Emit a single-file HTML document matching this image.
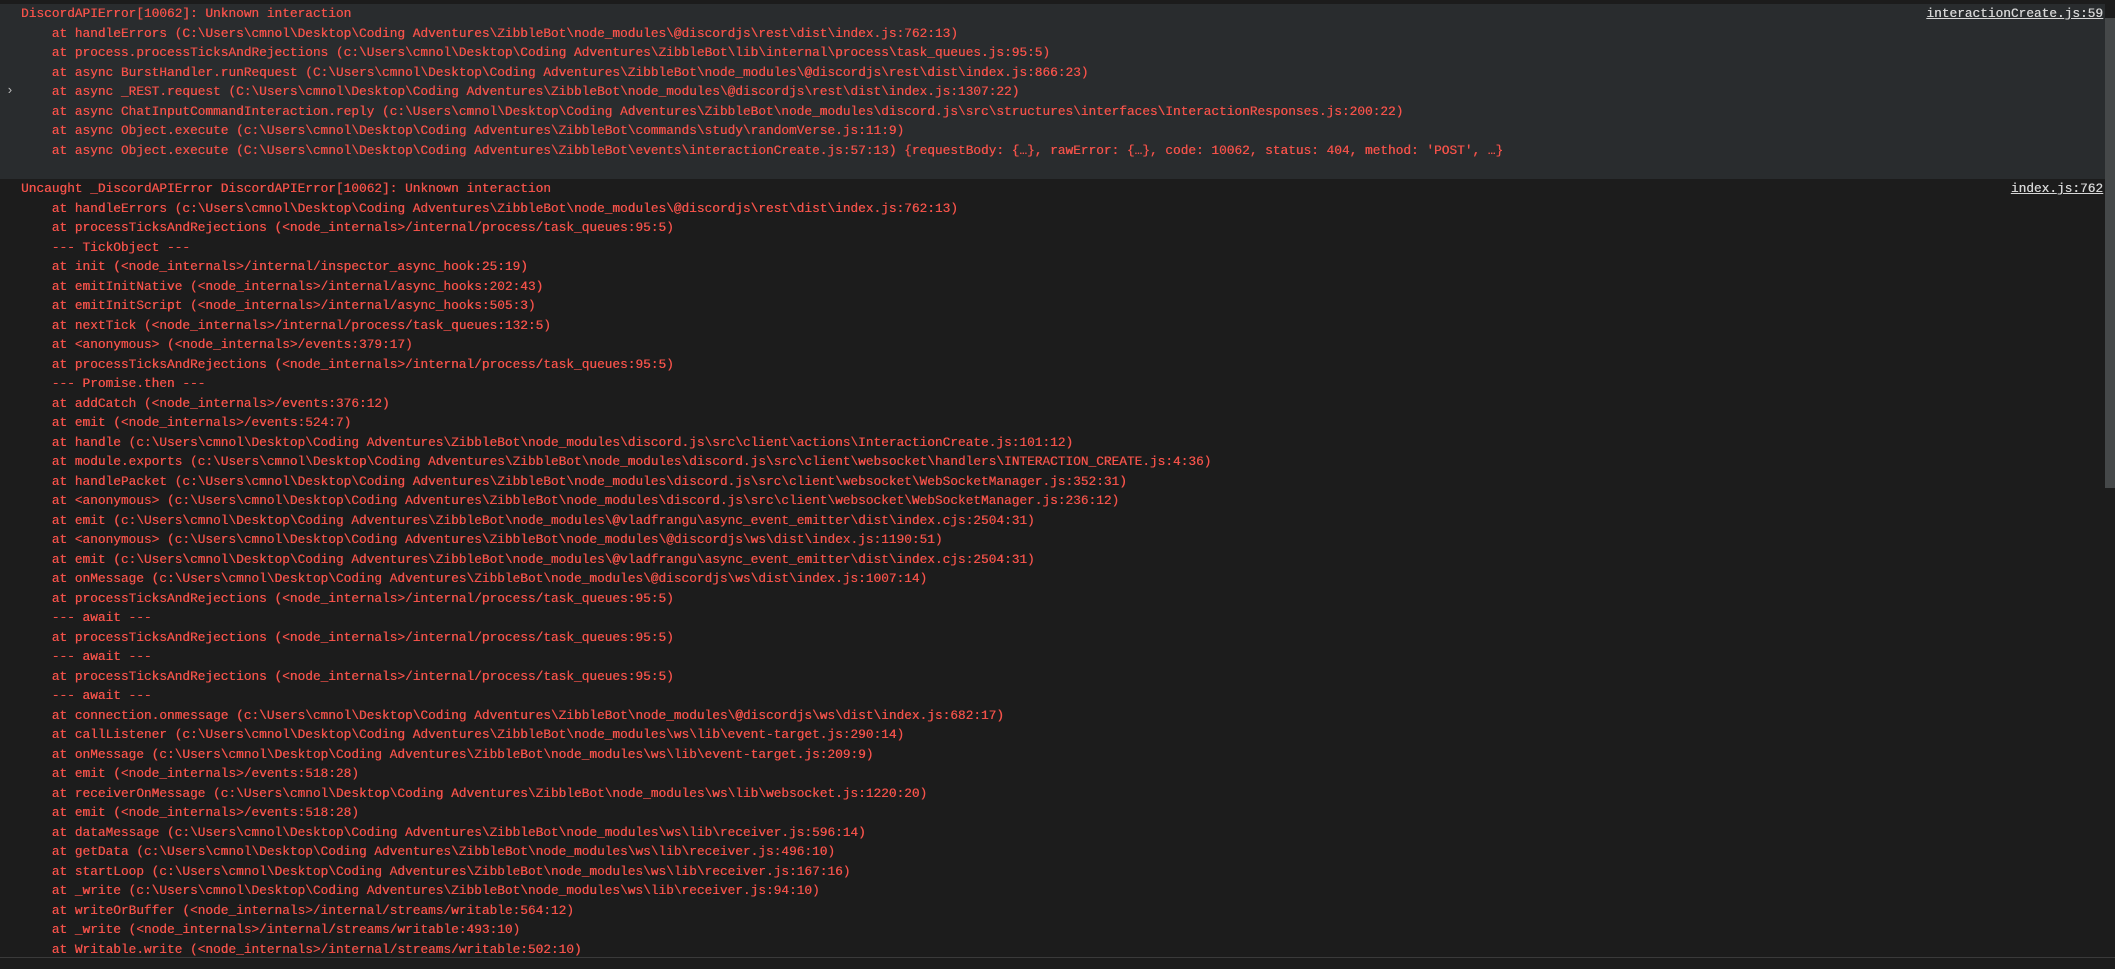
<!DOCTYPE html>
<html><head><meta charset="utf-8"><style>
html,body{margin:0;padding:0;width:2115px;height:968px;overflow:hidden;background:#1c1c1c;}
body{font-family:"Liberation Mono",monospace;font-size:12.8px;color:#f4524a;}
.b1{position:absolute;left:0;top:4px;width:2105px;height:175px;background:#292c2e;}
.b2{position:absolute;left:0;top:179px;width:2105px;height:778px;background:#1c1c1c;overflow:hidden;}
.l{height:19.5px;line-height:19.5px;white-space:pre;padding-left:21px;position:relative;text-shadow:0.3px 0 0 currentColor;}
.lk{position:absolute;right:2px;top:0;color:#d6d6d6;text-decoration:underline;}
.sb{position:absolute;left:2105px;top:18px;width:10px;height:470px;background:#454849;}
.bot{position:absolute;left:0;top:957px;width:2115px;height:11px;background:#1c1c1c;border-top:1px solid #3a3a3a;}
.chev{position:absolute;left:6px;top:79px;color:#bbb;font-size:13px;}
</style></head><body>
<div class="b1">
<div class="l">DiscordAPIError[10062]: Unknown interaction<span class="lk">interactionCreate.js:59</span></div>
<div class="l">    at handleErrors (C:\Users\cmnol\Desktop\Coding Adventures\ZibbleBot\node_modules\@discordjs\rest\dist\index.js:762:13)</div>
<div class="l">    at process.processTicksAndRejections (c:\Users\cmnol\Desktop\Coding Adventures\ZibbleBot\lib\internal\process\task_queues.js:95:5)</div>
<div class="l">    at async BurstHandler.runRequest (C:\Users\cmnol\Desktop\Coding Adventures\ZibbleBot\node_modules\@discordjs\rest\dist\index.js:866:23)</div>
<div class="l">    at async _REST.request (C:\Users\cmnol\Desktop\Coding Adventures\ZibbleBot\node_modules\@discordjs\rest\dist\index.js:1307:22)</div>
<div class="l">    at async ChatInputCommandInteraction.reply (c:\Users\cmnol\Desktop\Coding Adventures\ZibbleBot\node_modules\discord.js\src\structures\interfaces\InteractionResponses.js:200:22)</div>
<div class="l">    at async Object.execute (c:\Users\cmnol\Desktop\Coding Adventures\ZibbleBot\commands\study\randomVerse.js:11:9)</div>
<div class="l">    at async Object.execute (C:\Users\cmnol\Desktop\Coding Adventures\ZibbleBot\events\interactionCreate.js:57:13) {requestBody: {…}, rawError: {…}, code: 10062, status: 404, method: 'POST', …}</div>
<span class="chev">&#x203A;</span>
</div>
<div class="b2">
<div class="l">Uncaught _DiscordAPIError DiscordAPIError[10062]: Unknown interaction<span class="lk">index.js:762</span></div>
<div class="l">    at handleErrors (c:\Users\cmnol\Desktop\Coding Adventures\ZibbleBot\node_modules\@discordjs\rest\dist\index.js:762:13)</div>
<div class="l">    at processTicksAndRejections (&lt;node_internals&gt;/internal/process/task_queues:95:5)</div>
<div class="l">    --- TickObject ---</div>
<div class="l">    at init (&lt;node_internals&gt;/internal/inspector_async_hook:25:19)</div>
<div class="l">    at emitInitNative (&lt;node_internals&gt;/internal/async_hooks:202:43)</div>
<div class="l">    at emitInitScript (&lt;node_internals&gt;/internal/async_hooks:505:3)</div>
<div class="l">    at nextTick (&lt;node_internals&gt;/internal/process/task_queues:132:5)</div>
<div class="l">    at &lt;anonymous&gt; (&lt;node_internals&gt;/events:379:17)</div>
<div class="l">    at processTicksAndRejections (&lt;node_internals&gt;/internal/process/task_queues:95:5)</div>
<div class="l">    --- Promise.then ---</div>
<div class="l">    at addCatch (&lt;node_internals&gt;/events:376:12)</div>
<div class="l">    at emit (&lt;node_internals&gt;/events:524:7)</div>
<div class="l">    at handle (c:\Users\cmnol\Desktop\Coding Adventures\ZibbleBot\node_modules\discord.js\src\client\actions\InteractionCreate.js:101:12)</div>
<div class="l">    at module.exports (c:\Users\cmnol\Desktop\Coding Adventures\ZibbleBot\node_modules\discord.js\src\client\websocket\handlers\INTERACTION_CREATE.js:4:36)</div>
<div class="l">    at handlePacket (c:\Users\cmnol\Desktop\Coding Adventures\ZibbleBot\node_modules\discord.js\src\client\websocket\WebSocketManager.js:352:31)</div>
<div class="l">    at &lt;anonymous&gt; (c:\Users\cmnol\Desktop\Coding Adventures\ZibbleBot\node_modules\discord.js\src\client\websocket\WebSocketManager.js:236:12)</div>
<div class="l">    at emit (c:\Users\cmnol\Desktop\Coding Adventures\ZibbleBot\node_modules\@vladfrangu\async_event_emitter\dist\index.cjs:2504:31)</div>
<div class="l">    at &lt;anonymous&gt; (c:\Users\cmnol\Desktop\Coding Adventures\ZibbleBot\node_modules\@discordjs\ws\dist\index.js:1190:51)</div>
<div class="l">    at emit (c:\Users\cmnol\Desktop\Coding Adventures\ZibbleBot\node_modules\@vladfrangu\async_event_emitter\dist\index.cjs:2504:31)</div>
<div class="l">    at onMessage (c:\Users\cmnol\Desktop\Coding Adventures\ZibbleBot\node_modules\@discordjs\ws\dist\index.js:1007:14)</div>
<div class="l">    at processTicksAndRejections (&lt;node_internals&gt;/internal/process/task_queues:95:5)</div>
<div class="l">    --- await ---</div>
<div class="l">    at processTicksAndRejections (&lt;node_internals&gt;/internal/process/task_queues:95:5)</div>
<div class="l">    --- await ---</div>
<div class="l">    at processTicksAndRejections (&lt;node_internals&gt;/internal/process/task_queues:95:5)</div>
<div class="l">    --- await ---</div>
<div class="l">    at connection.onmessage (c:\Users\cmnol\Desktop\Coding Adventures\ZibbleBot\node_modules\@discordjs\ws\dist\index.js:682:17)</div>
<div class="l">    at callListener (c:\Users\cmnol\Desktop\Coding Adventures\ZibbleBot\node_modules\ws\lib\event-target.js:290:14)</div>
<div class="l">    at onMessage (c:\Users\cmnol\Desktop\Coding Adventures\ZibbleBot\node_modules\ws\lib\event-target.js:209:9)</div>
<div class="l">    at emit (&lt;node_internals&gt;/events:518:28)</div>
<div class="l">    at receiverOnMessage (c:\Users\cmnol\Desktop\Coding Adventures\ZibbleBot\node_modules\ws\lib\websocket.js:1220:20)</div>
<div class="l">    at emit (&lt;node_internals&gt;/events:518:28)</div>
<div class="l">    at dataMessage (c:\Users\cmnol\Desktop\Coding Adventures\ZibbleBot\node_modules\ws\lib\receiver.js:596:14)</div>
<div class="l">    at getData (c:\Users\cmnol\Desktop\Coding Adventures\ZibbleBot\node_modules\ws\lib\receiver.js:496:10)</div>
<div class="l">    at startLoop (c:\Users\cmnol\Desktop\Coding Adventures\ZibbleBot\node_modules\ws\lib\receiver.js:167:16)</div>
<div class="l">    at _write (c:\Users\cmnol\Desktop\Coding Adventures\ZibbleBot\node_modules\ws\lib\receiver.js:94:10)</div>
<div class="l">    at writeOrBuffer (&lt;node_internals&gt;/internal/streams/writable:564:12)</div>
<div class="l">    at _write (&lt;node_internals&gt;/internal/streams/writable:493:10)</div>
<div class="l">    at Writable.write (&lt;node_internals&gt;/internal/streams/writable:502:10)</div>
</div>
<div class="sb"></div>
<div class="bot"></div>
</body></html>
